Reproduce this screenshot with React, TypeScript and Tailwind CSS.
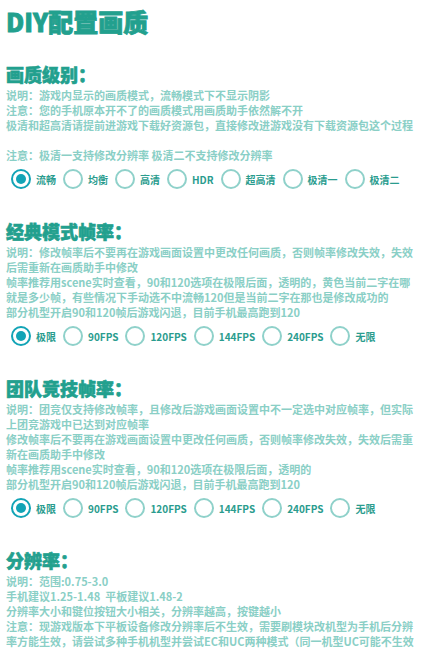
import React from 'react';

const FONT = { fontFamily: '"Noto Sans CJK SC", "Noto Sans", sans-serif' };

interface Section {
  title: string;
  lines: string[];
  options?: string[];
}

const QUALITY = ['流畅', '均衡', '高清', 'HDR', '超高清', '极清一', '极清二'];
const FPS = ['极限', '90FPS', '120FPS', '144FPS', '240FPS', '无限'];

const sections: Section[] = [
  {
    title: '画质级别：',
    lines: [
      '说明：游戏内显示的画质模式，流畅模式下不显示阴影',
      '注意：您的手机原本开不了的画质模式用画质助手依然解不开',
      '极清和超高清请提前进游戏下载好资源包，直接修改进游戏没有下载资源包这个过程',
      '',
      '注意：极清一支持修改分辨率 极清二不支持修改分辨率',
    ],
    options: QUALITY,
  },
  {
    title: '经典模式帧率：',
    lines: [
      '说明：修改帧率后不要再在游戏画面设置中更改任何画质，否则帧率修改失效，失效',
      '后需重新在画质助手中修改',
      '帧率推荐用scene实时查看，90和120选项在极限后面，透明的，黄色当前二字在哪',
      '就是多少帧，有些情况下手动选不中流畅120但是当前二字在那也是修改成功的',
      '部分机型开启90和120帧后游戏闪退，目前手机最高跑到120',
    ],
    options: FPS,
  },
  {
    title: '团队竞技帧率：',
    lines: [
      '说明：团竞仅支持修改帧率，且修改后游戏画面设置中不一定选中对应帧率，但实际',
      '上团竞游戏中已达到对应帧率',
      '修改帧率后不要再在游戏画面设置中更改任何画质，否则帧率修改失效，失效后需重',
      '新在画质助手中修改',
      '帧率推荐用scene实时查看，90和120选项在极限后面，透明的',
      '部分机型开启90和120帧后游戏闪退，目前手机最高跑到120',
    ],
    options: FPS,
  },
  {
    title: '分辨率：',
    lines: [
      '说明：范围:0.75-3.0',
      '手机建议1.25-1.48  平板建议1.48-2',
      '分辨率大小和键位按钮大小相关，分辨率越高，按键越小',
      '注意：现游戏版本下平板设备修改分辨率后不生效，需要刷模块改机型为手机后分辨',
      '率方能生效，请尝试多种手机机型并尝试EC和UC两种模式（同一机型UC可能不生效',
    ],
  },
];

function RadioRow({ options }: { options: string[] }) {
  const [picked, setPicked] = React.useState(0);
  return (
    <div className="mt-[6px] ml-[5px] flex items-center h-5">
      {options.map((o, i) => (
        <button
          key={o}
          type="button"
          onClick={() => setPicked(i)}
          className="flex items-center mr-[7px]"
        >
          <span
            className={
              i === picked
                ? 'w-5 h-5 rounded-full border-2 border-[#12a4b6] flex items-center justify-center'
                : 'w-5 h-5 rounded-full border-2 border-[#8fd1ca]'
            }
          >
            {i === picked && <span className="w-[10px] h-[10px] rounded-full bg-[#12a4b6]" />}
          </span>
          <span className="ml-[5px] text-[10px] font-bold text-[#2a9c8e] whitespace-nowrap">{o}</span>
        </button>
      ))}
    </div>
  );
}

export default function App() {
  return (
    <div className="h-[648px] overflow-hidden bg-white px-[6px] pt-[6px]" style={FONT}>
      <h1 className="text-[25px] leading-[30px] font-black text-[#22a08e] [-webkit-text-stroke:0.8px_#22a08e]">
        DIY配置画质
      </h1>
      {sections.map((s, idx) => (
        <div key={s.title} className={idx === 0 ? 'mt-[26px]' : 'mt-[30px]'}>
          <h2 className="text-[18px] leading-[24px] font-black text-[#22a08e] [-webkit-text-stroke:0.6px_#22a08e]">
            {s.title}
          </h2>
          <div className="mt-[2px] text-[11px] leading-[15px] font-bold text-[#8acfc6]">
            {s.lines.map((l, i) => (
              <div key={i} className="whitespace-pre h-[15px]">
                {l}
              </div>
            ))}
          </div>
          {s.options && <RadioRow options={s.options} />}
        </div>
      ))}
    </div>
  );
}
